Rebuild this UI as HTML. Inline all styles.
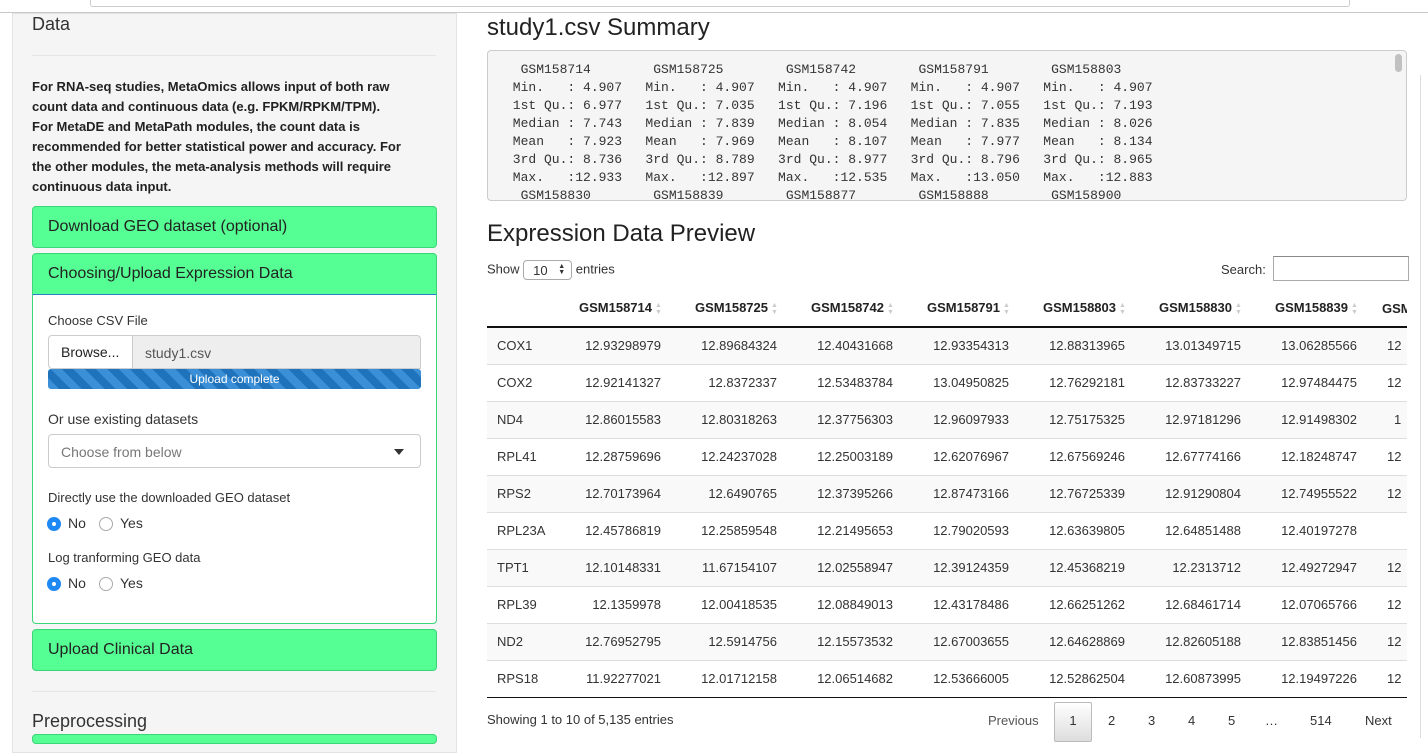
<!DOCTYPE html>
<html><head><meta charset="utf-8"><style>
*{box-sizing:border-box}
body{margin:0;width:1428px;height:738px;overflow:hidden;background:#fff;font-family:"Liberation Sans",sans-serif;color:#333;position:relative}
.top{position:absolute;left:0;top:0;width:1428px;height:13px;background:#fff;border-bottom:1px solid #c8c8c8}
.top .url{position:absolute;left:90px;top:-6px;width:1260px;height:13px;border:1px solid #ccc;border-radius:3px;background:#fff}
.well{position:absolute;left:12px;top:13px;width:445px;height:740px;background:#f5f5f5;border:1px solid #e3e3e3}
.abs{position:absolute}
.h{font-size:18px;color:#333}
.hr{position:absolute;left:32px;width:404px;height:1px;background:#e5e5e5}
.p{left:32px;top:77px;font-size:13px;font-weight:bold;line-height:20px;color:#222;white-space:nowrap}
.g{position:absolute;left:32px;width:405px;height:42px;background:#55ff93;border:1px solid #3cd679;border-radius:4px;font-size:16px;padding:11px 15px;color:#222}
.panel{position:absolute;left:32px;top:294px;width:405px;height:330px;background:#fff;border:1px solid #3cd679;border-top:1px solid #2a7fd0;border-radius:0 0 4px 4px}
.lbl{position:absolute;font-size:13px;color:#333}
.radio{position:absolute;width:14px;height:14px;border-radius:50%;border:1px solid #aaa;background:#fff}
.radio.on{background:#1e88f5;border-color:#1e88f5}
.radio.on:after{content:"";position:absolute;left:4px;top:4px;width:4px;height:4px;border-radius:50%;background:#fff}
.title{position:absolute;left:487px;font-size:24px;color:#222}
pre{position:absolute;left:487px;top:50px;width:920px;height:151px;margin:0;background:#f5f5f5;border:1px solid #ccc;border-radius:4px;font-family:"Liberation Mono",monospace;font-size:13px;line-height:18px;padding:10px 17px;overflow:hidden;color:#333}
table{position:absolute;left:0;top:0;border-collapse:collapse;font-size:13px;table-layout:fixed;width:940px}
th{height:37px;font-weight:bold;text-align:right;padding:0 6px 0 0;border-bottom:2px solid #111;white-space:nowrap;font-size:13px;color:#222}
td{height:37px;text-align:right;padding:0 6px 0 0;border-bottom:1px solid #ddd;white-space:nowrap;overflow:hidden}
td:first-child{text-align:left;padding-left:10px}
td.l{text-align:left;padding-left:24px}
tr:nth-child(odd) td{background:#f9f9f9}
tbody tr:last-child td{border-bottom:1.5px solid #111}
.srt{display:inline-block;color:#ccc;font-size:7px;line-height:7px;margin-left:3px;vertical-align:middle;width:6px}
.wrap{position:absolute;left:487px;top:290px;width:920px;height:410px;overflow:hidden}
.pg{position:absolute;top:705px;font-size:13px;color:#333}
</style></head><body>
<div class="top"><div class="url"></div></div>
<div class="well"></div>
<div class="abs h" style="left:32px;top:14px">Data</div>
<div class="hr" style="top:55px"></div>
<div class="abs p">For RNA-seq studies, MetaOmics allows input of both raw<br>count data and continuous data (e.g. FPKM/RPKM/TPM).<br>For MetaDE and MetaPath modules, the count data is<br>recommended for better statistical power and accuracy. For<br>the other modules, the meta-analysis methods will require<br>continuous data input.</div>
<div class="g" style="top:206px">Download GEO dataset (optional)</div>
<div class="g" style="top:253px;border-radius:4px 4px 0 0;height:42px">Choosing/Upload Expression Data</div>
<div class="panel"></div>
<div class="lbl" style="left:48px;top:313px">Choose CSV File</div>
<div class="abs" style="left:48px;top:335px;width:85px;height:34px;background:#fff;border:1px solid #ccc;border-radius:4px 0 0 4px;font-size:14px;padding:8px 12px;color:#222">Browse...</div>
<div class="abs" style="left:132px;top:335px;width:289px;height:34px;background:#eee;border:1px solid #ccc;border-radius:0 4px 0 0;font-size:14px;padding:9px 12px;color:#555">study1.csv</div>
<div class="abs" style="left:48px;top:369px;width:373px;height:20px;border-radius:3px;background:repeating-linear-gradient(45deg,#3a8fd6 0 8px,#1f73bd 8px 16px);color:#fff;font-size:12px;text-align:center;line-height:20px">Upload complete</div>
<div class="lbl" style="left:48px;top:411px;font-size:14px">Or use existing datasets</div>
<div class="abs" style="left:48px;top:434px;width:373px;height:34px;background:#fff;border:1px solid #ccc;border-radius:4px;font-size:14px;padding:9px 12px;color:#777">Choose from below<span style="position:absolute;right:16px;top:14px;border:5px solid transparent;border-top:6px solid #333;border-bottom:0"></span></div>
<div class="lbl" style="left:48px;top:490px">Directly use the downloaded GEO dataset</div>
<div class="radio on" style="left:47px;top:517px"></div><div class="lbl" style="left:68px;top:515px;font-size:14px">No</div>
<div class="radio" style="left:99px;top:517px"></div><div class="lbl" style="left:120px;top:515px;font-size:14px">Yes</div>
<div class="lbl" style="left:48px;top:550px">Log tranforming GEO data</div>
<div class="radio on" style="left:47px;top:577px"></div><div class="lbl" style="left:68px;top:575px;font-size:14px">No</div>
<div class="radio" style="left:99px;top:577px"></div><div class="lbl" style="left:120px;top:575px;font-size:14px">Yes</div>
<div class="g" style="top:629px">Upload Clinical Data</div>
<div class="hr" style="top:691px"></div>
<div class="abs h" style="left:32px;top:711px">Preprocessing</div>
<div class="abs" style="left:32px;top:734px;width:405px;height:10px;background:#55ff93;border:1px solid #3cd679;border-radius:4px"></div>

<div class="title" style="top:14px">study1.csv Summary</div>
<pre>  GSM158714        GSM158725        GSM158742        GSM158791        GSM158803    
 Min.   : 4.907   Min.   : 4.907   Min.   : 4.907   Min.   : 4.907   Min.   : 4.907  
 1st Qu.: 6.977   1st Qu.: 7.035   1st Qu.: 7.196   1st Qu.: 7.055   1st Qu.: 7.193  
 Median : 7.743   Median : 7.839   Median : 8.054   Median : 7.835   Median : 8.026  
 Mean   : 7.923   Mean   : 7.969   Mean   : 8.107   Mean   : 7.977   Mean   : 8.134  
 3rd Qu.: 8.736   3rd Qu.: 8.789   3rd Qu.: 8.977   3rd Qu.: 8.796   3rd Qu.: 8.965  
 Max.   :12.933   Max.   :12.897   Max.   :12.535   Max.   :13.050   Max.   :12.883  
  GSM158830        GSM158839        GSM158877        GSM158888        GSM158900</pre>
<div class="abs" style="left:1395px;top:54px;width:7px;height:18px;border-radius:4px;background:#c1c1c1"></div>
<div class="title" style="top:220px">Expression Data Preview</div>
<div class="abs" style="left:487px;top:260px;font-size:13px;white-space:nowrap">Show <span style="display:inline-block;width:49px;height:20px;border:1px solid #aaa;border-radius:4px;vertical-align:middle;padding:2px 0 0 9px;font-size:13px;position:relative">10<span style="position:absolute;right:6px;top:3px;font-size:7px;line-height:6px">▲<br>▼</span></span> entries</div>
<div class="abs" style="left:1221px;top:262px;font-size:13px">Search:</div>
<div class="abs" style="left:1273px;top:256px;width:136px;height:25px;border:1px solid #aaa;border-top-color:#888"></div>
<div class="wrap"><table>
<colgroup><col style="width:86px"><col style="width:94px"><col style="width:116px"><col style="width:116px"><col style="width:116px"><col style="width:116px"><col style="width:116px"><col style="width:116px"><col style="width:64px"></colgroup>
<thead><tr><th></th><th>GSM158714<span class="srt">▲<br>▼</span></th><th>GSM158725<span class="srt">▲<br>▼</span></th><th>GSM158742<span class="srt">▲<br>▼</span></th><th>GSM158791<span class="srt">▲<br>▼</span></th><th>GSM158803<span class="srt">▲<br>▼</span></th><th>GSM158830<span class="srt">▲<br>▼</span></th><th>GSM158839<span class="srt">▲<br>▼</span></th><th style="text-align:left;padding-left:19px">GSM158877</th></tr></thead>
<tbody>
<tr><td>COX1</td><td>12.93298979</td><td>12.89684324</td><td>12.40431668</td><td>12.93354313</td><td>12.88313965</td><td>13.01349715</td><td>13.06285566</td><td class="l">12</td></tr>
<tr><td>COX2</td><td>12.92141327</td><td>12.8372337</td><td>12.53483784</td><td>13.04950825</td><td>12.76292181</td><td>12.83733227</td><td>12.97484475</td><td class="l">12</td></tr>
<tr><td>ND4</td><td>12.86015583</td><td>12.80318263</td><td>12.37756303</td><td>12.96097933</td><td>12.75175325</td><td>12.97181296</td><td>12.91498302</td><td class="l" style="padding-left:31px">1</td></tr>
<tr><td>RPL41</td><td>12.28759696</td><td>12.24237028</td><td>12.25003189</td><td>12.62076967</td><td>12.67569246</td><td>12.67774166</td><td>12.18248747</td><td class="l">12</td></tr>
<tr><td>RPS2</td><td>12.70173964</td><td>12.6490765</td><td>12.37395266</td><td>12.87473166</td><td>12.76725339</td><td>12.91290804</td><td>12.74955522</td><td class="l">12</td></tr>
<tr><td>RPL23A</td><td>12.45786819</td><td>12.25859548</td><td>12.21495653</td><td>12.79020593</td><td>12.63639805</td><td>12.64851488</td><td>12.40197278</td><td></td></tr>
<tr><td>TPT1</td><td>12.10148331</td><td>11.67154107</td><td>12.02558947</td><td>12.39124359</td><td>12.45368219</td><td>12.2313712</td><td>12.49272947</td><td class="l">12</td></tr>
<tr><td>RPL39</td><td>12.1359978</td><td>12.00418535</td><td>12.08849013</td><td>12.43178486</td><td>12.66251262</td><td>12.68461714</td><td>12.07065766</td><td class="l">12</td></tr>
<tr><td>ND2</td><td>12.76952795</td><td>12.5914756</td><td>12.15573532</td><td>12.67003655</td><td>12.64628869</td><td>12.82605188</td><td>12.83851456</td><td class="l">12</td></tr>
<tr><td>RPS18</td><td>11.92277021</td><td>12.01712158</td><td>12.06514682</td><td>12.53666005</td><td>12.52862504</td><td>12.60873995</td><td>12.19497226</td><td class="l">12</td></tr>
</tbody></table></div>
<div class="pg" style="left:487px;top:712px">Showing 1 to 10 of 5,135 entries</div>
<div class="pg" style="left:988px;top:713px;color:#555">Previous</div>
<div class="abs" style="left:1054px;top:702px;width:38px;height:40px;border:1px solid #bbb;border-radius:2px;background:linear-gradient(#fff,#ddd);font-size:13px;text-align:center;padding-top:10px">1</div>
<div class="pg" style="left:1108px;top:713px">2</div>
<div class="pg" style="left:1148px;top:713px">3</div>
<div class="pg" style="left:1188px;top:713px">4</div>
<div class="pg" style="left:1228px;top:713px">5</div>
<div class="pg" style="left:1265px;top:713px">…</div>
<div class="pg" style="left:1310px;top:713px">514</div>
<div class="pg" style="left:1365px;top:713px">Next</div>
<div class="abs" style="left:1420px;top:75px;width:1px;height:663px;background:#ddd"></div>
</body></html>
